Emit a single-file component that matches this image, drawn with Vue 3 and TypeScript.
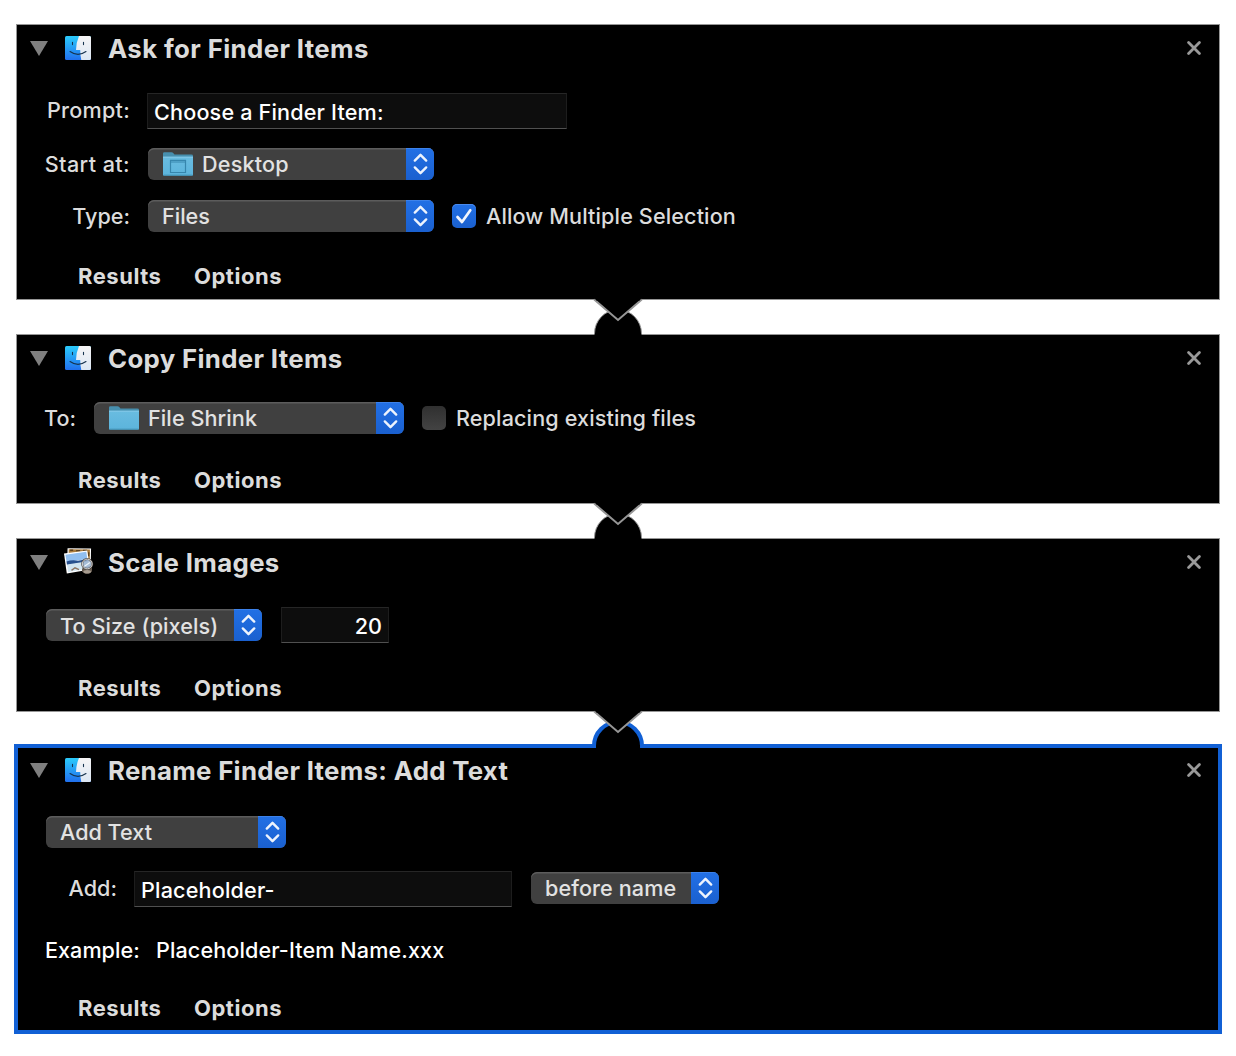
<script setup lang="ts">
type Icon = 'finder' | 'preview'
interface Action { id: string; title: string; icon: Icon; selected?: boolean }

const actions: Action[] = [
  { id: 'ask', title: 'Ask for Finder Items', icon: 'finder' },
  { id: 'copy', title: 'Copy Finder Items', icon: 'finder' },
  { id: 'scale', title: 'Scale Images', icon: 'preview' },
  { id: 'rename', title: 'Rename Finder Items: Add Text', icon: 'finder', selected: true },
]
</script>

<template>
  <svg class="defs" width="0" height="0" aria-hidden="true">
    <defs>
      <linearGradient id="g-blue" x1="0" y1="0" x2="0" y2="1">
        <stop offset="0" stop-color="#2bcbfb" /><stop offset="1" stop-color="#2170ee" />
      </linearGradient>
      <linearGradient id="g-white" x1="0" y1="0" x2="0" y2="1">
        <stop offset="0" stop-color="#f6f5f6" /><stop offset="1" stop-color="#dbe6f3" />
      </linearGradient>
      <linearGradient id="g-folder" x1="0" y1="0" x2="0" y2="1">
        <stop offset="0" stop-color="#69bce0" /><stop offset="1" stop-color="#5cb4dc" />
      </linearGradient>
      <symbol id="i-finder" viewBox="0 0 26 24">
        <rect width="26" height="24" rx="1.5" fill="url(#g-blue)" />
        <path d="M14 0H24.5Q26 0 26 1.5V22.5Q26 24 24.5 24H16.3Q15.2 19.5 15.2 14H11Q11.3 6 14 0Z" fill="url(#g-white)" />
        <path d="M7.5 6.3V8.6M18.5 6.3V8.6" stroke="#17344f" stroke-width="1.1" stroke-linecap="round" />
        <path d="M5 15.5Q13 21.2 21 15.5" fill="none" stroke="#17344f" stroke-width="1.1" stroke-linecap="round" />
      </symbol>
      <symbol id="i-preview" viewBox="0 0 30 28">
        <g transform="rotate(1 15 9)">
          <rect x="3.4" y=".4" width="23.5" height="18" fill="#fff" />
          <rect x="4.6" y="1.4" width="21.2" height="15.7" fill="#a97b3c" />
          <path d="M6 2.4h3M12 2.8h4M19 2.4h4M24.6 4v4" stroke="#5e421e" stroke-width="1.4" />
        </g>
        <path d="M0 5.6 23.2 2.4 26.2 21.5 2.8 25.6Z" fill="#fff" />
        <path d="M1.4 6.7 22.3 3.7 23.3 11 2.6 14Z" fill="#91bff0" />
        <path d="M2.5 13.6Q8 11.6 14 12.8L23.3 11 23.9 13.8 3 17.2Z" fill="#28508d" />
        <path d="M3 16.6 23.9 13.2 25 20.2 4.1 24Z" fill="#d2e5f0" />
        <path d="M7.5 22.4 11 19.8 15 21.6" stroke="#8e7461" stroke-width="1.4" fill="none" />
        <path d="M18 20.5V23.4Q22.8 28 28 23.4V17.5Z" fill="#665b50" />
        <ellipse cx="23.2" cy="23.7" rx="3.8" ry="1.8" fill="#a79c90" />
        <circle cx="23.2" cy="16" r="5" fill="#9fb6d2" fill-opacity=".85" stroke="#46413d" stroke-width="2" />
        <circle cx="23.2" cy="16" r="4.9" fill="none" stroke="#dcdcdc" stroke-width="1" />
        <path d="M20.5 18.3 26 14.5" stroke="#eef5fb" stroke-width="1.2" />
      </symbol>
      <symbol id="i-folder" viewBox="0 0 30 24">
        <path d="M0 1.5Q0 .2 1.3 .2H8.5Q9.7 .2 10.4 1.2L11.5 2.6H28.5Q30 2.6 30 4V9H0Z" fill="#478fae" />
        <path d="M0 4.8H30V22.5Q30 23.7 28.8 23.7H1.2Q0 23.7 0 22.5Z" fill="url(#g-folder)" />
        <path d="M0 5.2H30" stroke="#8acceb" stroke-width=".9" />
        <path d="M.5 23.2H29.5" stroke="#418dae" stroke-width="1" />
      </symbol>
      <symbol id="i-updown" viewBox="0 0 28 32">
        <path d="M8.8 12.6 14.5 6.8 20.2 12.6M8.8 19.4 14.5 25.2 20.2 19.4" fill="none" stroke="#edf3fd" stroke-width="2.4" stroke-linecap="round" stroke-linejoin="round" />
      </symbol>
    </defs>
  </svg>

  <main class="workflow">
    <section v-for="(a, i) in actions" :key="a.id" class="panel" :class="[a.id, { selected: a.selected }]">
      <svg v-if="i > 0" class="connector" width="56" height="42" viewBox="0 0 56 42">
        <path v-if="a.selected" d="M4 39V37A24 24 0 0 1 52 37V39" fill="#000" stroke="#1160d5" stroke-width="4" />
        <path v-if="a.selected" d="M6 36H50V42H6Z" fill="#000" />
        <path v-if="!a.selected" d="M4.5 38V36.5A23.5 23.8 0 0 1 51.5 36.5V38Z" fill="#000" />
        <path v-if="!a.selected" d="M4.5 37V36.5A23.5 23.8 0 0 1 51.5 36.5V37" fill="none" stroke="#969696" />
        <path d="M4 2H52L28 23.3Z" fill="#000" />
        <path d="M4.2 2.6 28 23 51.8 2.6" fill="none" stroke="#969696" stroke-width="2" />
        <path d="M4.6 0H51.4L49.8 3.4H6.2Z" fill="#000" />
      </svg>

      <header class="head">
        <svg class="disclosure" width="18" height="15" viewBox="0 0 18 15"><path d="M0 0H18L9 15Z" fill="#7f7f7f" /></svg>
        <svg v-if="a.icon === 'finder'" class="finder" width="26" height="24"><use href="#i-finder" /></svg>
        <svg v-else class="preview" width="30" height="28"><use href="#i-preview" /></svg>
        <h2>{{ a.title }}</h2>
        <svg class="close" width="14" height="14" viewBox="0 0 14 14"><path d="M1.6 1.6 12.4 12.4M12.4 1.6 1.6 12.4" stroke="#999" stroke-width="2.8" stroke-linecap="round" /></svg>
      </header>

      <template v-if="a.id === 'ask'">
        <div class="row prompt">
          <label><span class="t-prompt">Prompt:</span></label>
          <div class="field"><span class="t-choose">Choose a Finder Item:</span></div>
        </div>
        <div class="row start">
          <label><span class="t-start">Start at:</span></label>
          <div class="popup">
            <svg class="folder" width="30" height="24"><use href="#i-folder" /><path d="M7.5 8.3H22.5V20.5H7.5ZM7.5 10H22.5" fill="none" stroke="#3686ad" stroke-width="1.2" /></svg>
            <span class="t-desktop">Desktop</span>
            <svg class="cap" width="28" height="32"><use href="#i-updown" /></svg>
          </div>
        </div>
        <div class="row type">
          <label><span class="t-type">Type:</span></label>
          <div class="popup">
            <span class="t-files">Files</span>
            <svg class="cap" width="28" height="32"><use href="#i-updown" /></svg>
          </div>
          <span class="check on"><svg width="24" height="24" viewBox="0 0 24 24"><path d="M5.5 13 10 18 18.3 6.3" fill="none" stroke="#f1f5fd" stroke-width="2.7" stroke-linecap="round" stroke-linejoin="round" /></svg></span>
          <span class="t-allow">Allow Multiple Selection</span>
        </div>
      </template>

      <div v-else-if="a.id === 'copy'" class="row to">
        <span class="lead"><span class="t-to">To:</span></span>
        <div class="popup">
          <svg class="folder" width="30" height="24"><use href="#i-folder" /></svg>
          <span class="t-shrink">File Shrink</span>
          <svg class="cap" width="28" height="32"><use href="#i-updown" /></svg>
        </div>
        <span class="check"></span>
        <span class="t-replacing">Replacing existing files</span>
      </div>

      <div v-else-if="a.id === 'scale'" class="row size">
        <div class="popup">
          <span class="t-size">To Size (pixels)</span>
          <svg class="cap" width="28" height="32"><use href="#i-updown" /></svg>
        </div>
        <div class="field number"><span class="t-num">20</span></div>
      </div>

      <template v-else>
        <div class="row mode">
          <div class="popup">
            <span class="t-addtext">Add Text</span>
            <svg class="cap" width="28" height="32"><use href="#i-updown" /></svg>
          </div>
        </div>
        <div class="row add">
          <label><span class="t-add">Add:</span></label>
          <div class="field"><span class="t-placeholder">Placeholder-</span></div>
          <div class="popup">
            <span class="t-before">before name</span>
            <svg class="cap" width="28" height="32"><use href="#i-updown" /></svg>
          </div>
        </div>
        <div class="row example">
          <span class="ex-label"><span class="t-example">Example:</span></span>
          <span class="t-item">Placeholder-Item Name.xxx</span>
        </div>
      </template>

      <footer class="foot">
        <span class="results">Results</span>
        <span class="options">Options</span>
      </footer>
    </section>
  </main>
</template>

<style>
body { margin: 0; background: #fff; }
</style>

<style scoped>
.defs { position: absolute; }
.workflow {
  box-sizing: border-box;
  width: 1236px;
  height: 1056px;
  padding: 24px 16px 0;
  display: flex;
  flex-direction: column;
  gap: 34px;
  background: #fff;
  font-family: Inter, "Liberation Sans", sans-serif;
  font-size: 21.6px;
  font-weight: 450;
  line-height: 32px;
  color: #dcdcdc;
  white-space: nowrap;
}
.panel {
  position: relative;
  display: flex;
  flex-direction: column;
  background: #000;
  box-shadow: inset 0 0 0 1px #969696;
}
.ask { height: 276px; }
.copy { height: 170px; }
.scale { height: 174px; }
.rename { height: 286px; }
.selected { box-shadow: inset 0 0 0 2px #1160d5, 0 0 0 2px #1160d5; }
.connector { position: absolute; left: 574px; top: -37px; }

.head { display: flex; align-items: center; height: 48px; padding-left: 14px; }
.disclosure { flex: none; }
.finder { margin-left: 17px; }
.preview { margin-left: 16px; }
.head h2 { margin: 2px 0 0 17px; font-size: 25.8px; font-weight: 700; letter-spacing: .33px; color: #dcdcdc; }
.preview + h2 { margin-left: 14px; }
.ask h2 { letter-spacing: .38px; }
.rename h2 { letter-spacing: .3px; }
.close { margin: 0 19px 0 auto; }

.row { display: flex; align-items: center; }
.row label { width: 114px; text-align: right; }
.row label span { display: inline-block; }
.prompt { margin-top: 21px; }
.prompt .field { width: 420px; margin-left: 17px; }
.start { margin-top: 19px; }
.type { margin-top: 20px; }
.start .popup, .type .popup { width: 286px; margin-left: 18px; }

.field {
  box-sizing: border-box;
  height: 36px;
  padding: 3px 7px 0 6px;
  background: #0d0d0d;
  border: 1px solid #1d1d1d;
  border-top-color: #262626;
  border-bottom-color: #505050;
  line-height: 31px;
  color: #fff;
}
.number { padding-right: 6px; text-align: right; }
.popup {
  display: flex;
  align-items: center;
  box-sizing: border-box;
  height: 32px;
  padding-left: 14px;
  overflow: hidden;
  border-radius: 6px;
  background: #404040;
  box-shadow: inset 0 1.5px 0 #5c5c5c;
  color: #e2e2e2;
}
.folder { margin: 0 9px 0 1px; }
.cap { margin-left: auto; flex: none; background: linear-gradient(#2270e5, #1a60cf); box-shadow: inset 0 1px 0 #3d82ea; }
.check {
  width: 24px;
  height: 24px;
  margin: 0 10px 0 18px;
  border-radius: 5px;
  background: linear-gradient(#303030, #434343);
}
.check svg { display: block; }
.check.on { background: linear-gradient(#2270e5, #1a60cf); box-shadow: inset 0 1px 0 #4a8aec; }

.to { margin-top: 20px; }
.lead { width: 50px; padding-left: 28px; }
.to .popup { width: 310px; }
.size { margin-top: 21px; padding-left: 30px; }
.size .popup { width: 216px; }
.size .popup span { padding-top: 2px; }
.size .field { width: 108px; margin-left: 19px; }
.mode { margin-top: 22px; padding-left: 30px; }
.mode .popup { width: 240px; }
.add { margin-top: 23px; }
.row.add label { width: 101px; }
.prompt label, .add label { padding-bottom: 2px; }
.add .field { width: 378px; margin-left: 17px; }
.add .popup { width: 188px; margin: -2px 0 0 19px; }
.example { margin-top: 27px; padding-left: 29px; color: #fff; }
.ex-label { width: 111px; }
.foot { display: flex; align-items: center; height: 48px; margin-top: auto; padding-left: 62px; font-size: 22px; font-weight: 700; letter-spacing: .52px; }
.results { width: 116px; }

/* Tracking per string */
.t-prompt { letter-spacing: .25px; }
.t-start { letter-spacing: .4px; }
.t-desktop { letter-spacing: .2px; }
.t-choose, .t-placeholder { letter-spacing: .17px; }
.t-allow, .t-replacing { letter-spacing: .12px; }
.t-item { letter-spacing: .1px; }
.t-before, .t-shrink, .t-size { letter-spacing: .09px; }
.t-example { letter-spacing: .03px; }
</style>
